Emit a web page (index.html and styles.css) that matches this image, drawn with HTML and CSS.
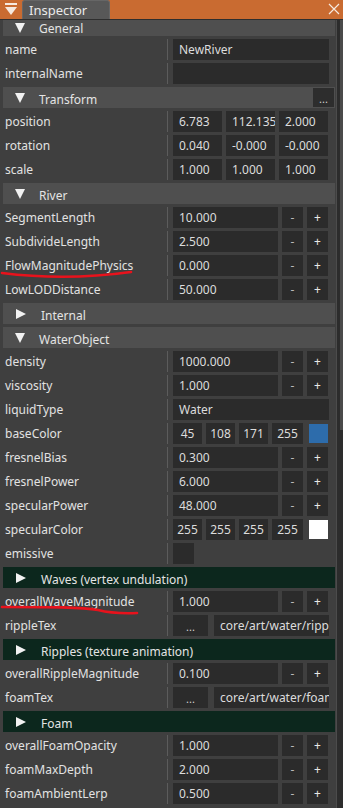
FILE: index.html
```html
<!DOCTYPE html>
<html>
<head>
<meta charset="utf-8">
<link rel="stylesheet" href="styles.css">
</head>
<body>
<div class="app">
  <div class="titlebar">
    <svg class="ticon" width="14" height="14" viewBox="0 0 14 14"><rect x="1" y="1" width="12" height="2" fill="#f6e9df"/><polygon points="1,5 13,5 7,13" fill="#f6e9df"/></svg>
    <div class="tab">Inspector</div>
    <div class="spacer"></div>
    <svg class="close" width="12" height="12" viewBox="0 0 12 12"><path d="M1 1 L11 11 M11 1 L1 11" stroke="#f6e9df" stroke-width="1.2" fill="none"/></svg>
  </div>
  <div class="main">
    <div class="panel">
      <div class="list">
        <div class="hdr first"><span class="tri down"></span>General</div>
        <div class="row"><div class="lbl">name</div><div class="val"><div class="box full">NewRiver</div></div></div>
        <div class="row"><div class="lbl">internalName</div><div class="val"><div class="box full"></div></div></div>
        <div class="hdr"><span class="tri down"></span>Transform<span class="grow"></span><span class="hbtn">...</span></div>
        <div class="row"><div class="lbl">position</div><div class="val"><div class="box v3">6.783</div><div class="box v3">112.135</div><div class="box v3">2.000</div></div></div>
        <div class="row"><div class="lbl">rotation</div><div class="val"><div class="box v3">0.040</div><div class="box v3">-0.000</div><div class="box v3">-0.000</div></div></div>
        <div class="row"><div class="lbl">scale</div><div class="val"><div class="box v3">1.000</div><div class="box v3">1.000</div><div class="box v3">1.000</div></div></div>
        <div class="hdr"><span class="tri down"></span>River</div>
        <div class="row"><div class="lbl">SegmentLength</div><div class="val"><div class="box num">10.000</div><div class="btn minus">-</div><div class="btn">+</div></div></div>
        <div class="row"><div class="lbl">SubdivideLength</div><div class="val"><div class="box num">2.500</div><div class="btn minus">-</div><div class="btn">+</div></div></div>
        <div class="row"><div class="lbl">FlowMagnitudePhysics</div><div class="val"><div class="box num">0.000</div><div class="btn minus">-</div><div class="btn">+</div></div></div>
        <div class="row"><div class="lbl">LowLODDistance</div><div class="val"><div class="box num">50.000</div><div class="btn minus">-</div><div class="btn">+</div></div></div>
        <div class="hdr"><span class="tri right"></span>Internal</div>
        <div class="hdr"><span class="tri down"></span>WaterObject</div>
        <div class="row"><div class="lbl">density</div><div class="val"><div class="box num">1000.000</div><div class="btn minus">-</div><div class="btn">+</div></div></div>
        <div class="row"><div class="lbl">viscosity</div><div class="val"><div class="box num">1.000</div><div class="btn minus">-</div><div class="btn">+</div></div></div>
        <div class="row"><div class="lbl">liquidType</div><div class="val"><div class="box full">Water</div></div></div>
        <div class="row"><div class="lbl">baseColor</div><div class="val"><div class="box c">45</div><div class="box c">108</div><div class="box c">171</div><div class="box c wide">255</div><div class="swatch" style="background:rgb(45,108,171)"></div></div></div>
        <div class="row"><div class="lbl">fresnelBias</div><div class="val"><div class="box num">0.300</div><div class="btn minus">-</div><div class="btn">+</div></div></div>
        <div class="row"><div class="lbl">fresnelPower</div><div class="val"><div class="box num">6.000</div><div class="btn minus">-</div><div class="btn">+</div></div></div>
        <div class="row"><div class="lbl">specularPower</div><div class="val"><div class="box num">48.000</div><div class="btn minus">-</div><div class="btn">+</div></div></div>
        <div class="row"><div class="lbl">specularColor</div><div class="val"><div class="box c">255</div><div class="box c">255</div><div class="box c">255</div><div class="box c wide">255</div><div class="swatch" style="background:rgb(255,255,255)"></div></div></div>
        <div class="row"><div class="lbl">emissive</div><div class="val"><div class="box check"></div></div></div>
        <div class="hdr green"><span class="tri right"></span>Waves (vertex undulation)</div>
        <div class="row"><div class="lbl">overallWaveMagnitude</div><div class="val"><div class="box num">1.000</div><div class="btn minus">-</div><div class="btn">+</div></div></div>
        <div class="row"><div class="lbl">rippleTex</div><div class="val"><div class="btn dots">...</div><div class="box path">core/art/water/ripple.dds</div></div></div>
        <div class="hdr green"><span class="tri right"></span>Ripples (texture animation)</div>
        <div class="row"><div class="lbl">overallRippleMagnitude</div><div class="val"><div class="box num">0.100</div><div class="btn minus">-</div><div class="btn">+</div></div></div>
        <div class="row"><div class="lbl">foamTex</div><div class="val"><div class="btn dots">...</div><div class="box path">core/art/water/foam.dds</div></div></div>
        <div class="hdr green"><span class="tri right"></span>Foam</div>
        <div class="row"><div class="lbl">overallFoamOpacity</div><div class="val"><div class="box num">1.000</div><div class="btn minus">-</div><div class="btn">+</div></div></div>
        <div class="row"><div class="lbl">foamMaxDepth</div><div class="val"><div class="box num">2.000</div><div class="btn minus">-</div><div class="btn">+</div></div></div>
        <div class="row"><div class="lbl">foamAmbientLerp</div><div class="val"><div class="box num">0.500</div><div class="btn minus">-</div><div class="btn">+</div></div></div>
      </div>
    </div>
    <div class="scroll"><div class="thumb"></div></div>
  </div>
  <svg class="marks" width="343" height="808" viewBox="0 0 343 808">
    <path d="M2 273 Q 66 281 131 272" stroke="#e8121c" stroke-width="2.6" fill="none" stroke-linecap="round"/>
    <path d="M2 607 C 50 607 82 607 98 610 C 110 613 125 613.5 137 613" stroke="#e8121c" stroke-width="2.6" fill="none" stroke-linecap="round"/>
  </svg>
</div>
</body>
</html>
```

FILE: styles.css
```css
html, body {
  margin: 0;
  padding: 0;
  background: #3f3f3f;
}
body {
  font-family: "Noto Sans", "Open Sans", sans-serif;
  font-size: 12px;
  color: #dedede;
}
.app {
  position: relative;
  width: 343px;
  height: 808px;
  overflow: hidden;
  display: flex;
  flex-direction: column;
}
.titlebar {
  position: relative;
  z-index: 2;
  height: 19px;
  flex: none;
  background: #c96b31;
  border-bottom: 1px solid #2e2e2e;
  display: flex;
  align-items: flex-end;
}
.ticon {
  margin: 0 4px 3px 4px;
}
.tab {
  width: 80px;
  height: 18px;
  padding-left: 6px;
  background: #585858;
  border: 1px solid #666;
  border-bottom: none;
  border-radius: 3px 3px 0 0;
  line-height: 18px;
  font-size: 13px;
  color: #eaeaea;
  box-sizing: content-box;
}
.spacer { flex: 1; }
.close {
  margin: 0 3px 4px 0;
  align-self: flex-start;
  margin-top: 3px;
}
.main {
  flex: 1;
  display: flex;
  overflow: hidden;
}
.panel {
  width: 333px;
  padding-left: 3px;
  overflow: hidden;
}
.list {
  display: flex;
  flex-direction: column;
  gap: 3px;
}
.hdr {
  height: 21px;
  width: 332px;
  flex: none;
  background: #4f4f4f;
  display: flex;
  align-items: center;
  line-height: 21px;
  color: #e4e4e4;
  padding-top: 3px;
  box-sizing: border-box;
}
.hdr.first {
  height: 16px;
  padding-top: 0;
}
.hdr.green {
  background: #0c271d;
}
.tri {
  width: 0;
  height: 0;
  margin-left: 12px;
  margin-right: 14px;
  margin-top: -3px;
}
.hdr.first .tri { margin-top: 0; }
.tri.down {
  border-left: 5.5px solid transparent;
  border-right: 5.5px solid transparent;
  border-top: 10px solid #f2f2f2;
}
.tri.right {
  margin-left: 13px;
  margin-right: 15px;
  border-top: 5.5px solid transparent;
  border-bottom: 5.5px solid transparent;
  border-left: 10px solid #f2f2f2;
}
.grow { flex: 1; }
.hbtn {
  width: 21px;
  height: 19px;
  margin-right: 1px;
  margin-top: -3px;
  background: #2d2d2d;
  color: #cfcfcf;
  font-size: 11px;
  text-align: center;
  line-height: 22px;
}
.row {
  height: 21px;
  flex: none;
  display: flex;
}
.lbl {
  width: 162px;
  padding-left: 2px;
  border-right: 1px solid #5c5c5c;
  line-height: 22px;
  white-space: nowrap;
  overflow: hidden;
  color: #e2e2e2;
}
.val {
  margin-left: 5px;
  display: flex;
  gap: 4px;
}
.box {
  height: 21px;
  background: #2b2b2b;
  line-height: 22px;
  padding-left: 6px;
  box-sizing: border-box;
  white-space: nowrap;
  overflow: hidden;
  color: #dcdcdc;
}
.box.full { width: 156px; }
.box.v3 { width: 49px; }
.box.num { width: 105px; }
.box.c {
  width: 29px;
  padding-left: 0;
  text-align: center;
}
.box.c.wide { width: 31px; }
.box.check { width: 21px; padding: 0; }
.box.path { width: 115px; margin-left: 2px; }
.swatch {
  width: 19px;
  height: 19px;
  margin-left: 2px;
  margin-top: 1px;
}
.btn {
  width: 21px;
  height: 21px;
  background: #2b2b2b;
  text-align: center;
  line-height: 21px;
  color: #e8e8e8;
}
.btn.minus { color: #b8b8b8; }
.btn.dots {
  width: 35px;
  font-size: 11px;
  line-height: 24px;
  color: #cfcfcf;
}
.scroll {
  width: 6px;
  background: #2c2c2c;
  border-left: 1px solid #4c4c4c;
}
.thumb {
  margin-left: 3px;
  width: 3px;
  height: 410px;
  background: #4a4a4a;
}
.marks {
  position: absolute;
  left: 0;
  top: 0;
  pointer-events: none;
  z-index: 3;
}
```
